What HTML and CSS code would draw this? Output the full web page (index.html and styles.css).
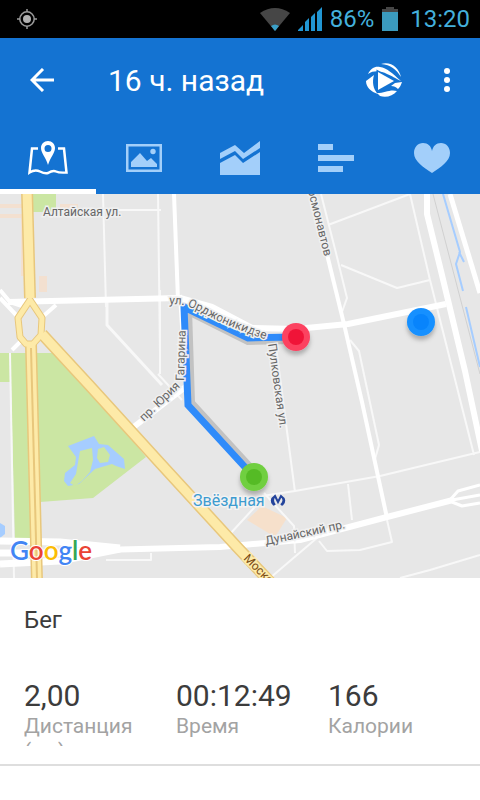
FILE: index.html
```html
<!DOCTYPE html>
<html lang="ru">
<head>
    <meta charset="UTF-8">
    <meta name="viewport" content="width=device-width, initial-scale=1.0">
    <title>16 ч. назад</title>
    <link rel="stylesheet" href="styles.css">
</head>
<body>
    <div class="status-bar">
        <svg class="gps" width="20" height="20" viewBox="0 0 20 20" fill="none" stroke="#9a9a9a" stroke-width="1.5">
            <circle cx="10" cy="10" r="7.2"/>
            <circle cx="10" cy="10" r="4" fill="#b0b0b0" stroke="none"/>
            <path d="M10 0v3M10 17v3M0 10h3M17 10h3"/>
        </svg>
        <div class="status-right">
            <svg width="30" height="23" viewBox="0 0 30 23">
                <path d="M0 5Q15-5 30 5L15 23Z" fill="#464646"/>
                <path d="M11 18Q15 15 19 18L15 23Z" fill="#3ba0c8"/>
            </svg>
            <svg class="signal" width="24" height="24" viewBox="0 0 24 24" fill="#2196d3">
                <path d="M0 24v-1l5-5v6zM7 24v-9l4-4v13zM13 24V10l4-4v18zM19 24V5l5-5v24z"/>
            </svg>
            <span>86%</span>
            <svg class="battery" width="16" height="24" viewBox="0 0 16 24">
                <path d="M4 0h8v2h4v5H0V2h4z" fill="#464646"/>
                <path d="M0 5h16v19H0z" fill="#3b9abd"/>
            </svg>
            <span>13:20</span>
        </div>
    </div>

    <header class="header">
        <div class="toolbar">
            <button class="icon-btn" aria-label="Назад">
                <svg width="24" height="24" viewBox="0 0 24 24" fill="none" stroke="#fff" stroke-width="3">
                    <path d="M24 12H2M13 1L2 12l11 11"/>
                </svg>
            </button>
            <h1>16 ч. назад</h1>
            <button class="icon-btn relive" aria-label="Воспроизвести">
                <svg width="36" height="34" viewBox="0 0 36 34" fill="#fff">
                    <path d="M2 11C5 5 9 3 14 4c7 1 12 6 21 14-6-3-9-5-14-7C15 8 8 7 2 11z"/>
                    <path d="M15 1c10-3 18 4 20 13C30 6 25 2 15 1z"/>
                    <path d="M0 18l8-6c-2 7-1 14 4 19C5 29 0 24 0 18z"/>
                    <path d="M25 23l4-3 7-1c-1 3-2 5-4 7-2-2-4-3-7-3z"/>
                    <path d="M11 30c8 0 13-4 20-2-4 5-11 7-17 5-1-1-2-2-3-3z"/>
                    <path d="M12 9l16 9-16 9z" stroke="#1473d2" stroke-width="3" paint-order="stroke"/>
                </svg>
            </button>
            <button class="icon-btn" aria-label="Ещё">
                <svg width="6" height="26" viewBox="0 0 6 26" fill="#fff">
                    <circle cx="3" cy="4" r="3"/>
                    <circle cx="3" cy="13" r="3"/>
                    <circle cx="3" cy="22" r="3"/>
                </svg>
            </button>
        </div>
        <nav class="tabs">
            <button class="tab active" aria-label="Карта">
                <svg width="40" height="34" viewBox="0 0 40 34">
                    <path d="M10 7.500H4L1.500 31.500Q7 28 12 30.500T20 32Q25 29 28 30.500T38.500 31.500L36 7.500H30" fill="none" stroke="#fff" stroke-width="2.500"/>
                    <path d="M20 0c-4 0-7 3-7 7 0 5 5 10 7 17 2-7 7-12 7-17 0-4-3-7-7-7zm0 4a3.500 3.500 0 1 1 0 7 3.500 3.500 0 0 1 0-7z" fill="#fff" fill-rule="evenodd"/>
                </svg>
            </button>
            <button class="tab" aria-label="Фото">
                <svg width="36" height="28" viewBox="0 0 36 28" fill="#a3cffa">
                    <path d="M0 0h36v28H0zM2.500 2.500v23h31v-23z" fill-rule="evenodd"/>
                    <path d="M5 23v-5l9-9 7 8 4-3 6 6v3z"/>
                    <circle cx="27" cy="7.500" r="2.700"/>
                </svg>
            </button>
            <button class="tab" aria-label="Графики">
                <svg width="40" height="34" viewBox="0 0 40 34" fill="#a3cffa">
                    <path d="M0 12l15-8 9 8L40 0v7L23 18l-8-8-15 8z"/>
                    <path d="M0 22l15-8 8 8 17-11v23H0z"/>
                </svg>
            </button>
            <button class="tab" aria-label="Отрезки">
                <svg width="36" height="28" viewBox="0 0 36 28" fill="#a3cffa">
                    <path d="M0 0h15v6H0zM0 11h36v6H0zM0 22h25v6H0z"/>
                </svg>
            </button>
            <button class="tab" aria-label="Пульс">
                <svg width="36" height="30" viewBox="0 0 36 30" fill="#a3cffa">
                    <path d="M18 30C9 24 0 18 0 10 0 4 4 0 9 0c5 0 8 3 9 8 1-5 4-8 9-8s9 4 9 10c0 8-9 14-18 20z"/>
                </svg>
            </button>
        </nav>
    </header>

    <main>
        <svg class="map" viewBox="0 194 480 384" role="img" aria-label="Карта маршрута">
            <defs>
                <path id="ordzh" d="M169 304L184 305Q193 308 212 318T268 340"/>
                <filter id="shadow" x="-30%" y="-30%" width="160%" height="180%">
                    <feDropShadow dx="0" dy="4" stdDeviation="2" flood-opacity="0.25"/>
                </filter>
            </defs>
            <rect y="194" width="480" height="384" fill="#e7e7e7"/>

            <!-- парки -->
            <g fill="#cbe6a3">
                <path d="M33 194h23v18H33z"/>
                <path d="M0 353h62l84 104-53 41-53 4V540H15L11 385H0z"/>
            </g>
            <path d="M0 382h11l3 158v38H0z" fill="#e7e7e7"/>
            <path d="M10 353L14 578" class="road r1"/>

            <!-- застройка -->
            <g fill="#f3e0d0">
                <path d="M0 204h22v4H0zM0 214h22v4H0zM60 204h18v8H60zM21 218h3v58h-3zM39 276h8v16h-8z"/>
                <path d="M247 520l15-14 25 12-12 19z" fill="#f6e0cb"/>
            </g>

            <!-- вода -->
            <g fill="#a6cdff">
                <path d="M68 446l26-10 5 8 9 1 16 14 1 10-9-3-4-2-17 5-16 15-11 2-4-5 1-8 10-8 1-8z"/>
                <path d="M0 523l5 3v8l-5 4z"/>
            </g>
            <g fill="#cbe6a3">
                <path d="M80 451l12-3 1 12-3 12-8 9-7 5-5-3 6-9z"/>
                <path d="M98 449l6-2 6 8-2 7-8 1-3-5z"/>
            </g>
            <path d="M443 194l17 58-4 12 7 27M466 307l14 60M459 252l5 10" fill="none" stroke="#a6cdff" stroke-width="2"/>
            <path d="M433 194l47 180" fill="none" stroke="#d0d0d0"/>

            <!-- мелкие улицы -->
            <g class="road r1">
                <path d="M103 194l3 113"/>
                <path d="M86 210h75M158 194l2 160"/>
                <path d="M107 300v25l55 60" stroke-width="3"/>
                <path d="M160 290v84M158 374l24 26"/>
                <path d="M321 194l15 59 11 45-5 14M328 225l82-31 20 86M341 265l56 23 33-8"/>
                <path d="M350 340l9 11 20 94-4 14"/>
                <path d="M430 280l44 175M275 340l20 152M230 534l34-37M262 496l33-5 85-15 100-24"/>
                <path d="M348 484l4 36M387 520l5 22-32 8-33 1-8-10"/>
                <path d="M400 578l30-8 50-15M264 493l30 33 1 27M270 578l61-52"/>
                <path d="M14 566h456" opacity="0"/>
                <path d="M106 560h45v-7"/>
            </g>

            <!-- крупные улицы -->
            <g class="road r2">
                <path d="M0 290l10 12 12 4M0 298l18 19M40 319l16-14M12 350l8-8" stroke-width="4"/>
                <path d="M8 302l172-4 32 9 40 21 44 1 52-5 98-20" stroke-width="6"/>
                <path d="M174 194l4 106M180 295l7 110" stroke-width="4"/>
                <path d="M313 194l10 44 21 86 18 78 25 116" stroke-width="4"/>
                <path d="M427 194v20l14 57 24 100 17 80" stroke-width="6"/>
                <path d="M450 194l30 99" stroke-width="5"/>
                <path d="M188 385l-57 44" stroke-width="6"/>
                <path d="M60 551l160-4 80-7 87-23 66-17" stroke-width="6"/>
                <path d="M0 541l60 1 60 6M0 564l60-3 60-12M0 553h100" stroke-width="7"/>
                <path d="M450 500l8-9 22-6M452 500l28-5M452 502l10 4 18-3" stroke-width="3"/>
            </g>

            <!-- шоссе -->
            <g class="hw-edge">
                <path d="M27 190l3 108M31 345l6 237M42 334l48 52 70 77 78 85 34 36"/>
                <path d="M30 300l12 18-1 17-8 9h-7l-6-7-2-19z" class="ring"/>
            </g>
            <g class="hw">
                <path d="M27 190l3 108M31 345l6 237M42 334l48 52 70 77 78 85 34 36"/>
                <path d="M30 300l12 18-1 17-8 9h-7l-6-7-2-19z" class="ring"/>
            </g>
            <path d="M31 348l6 230" fill="none" stroke="#e8c77c" stroke-width="2"/>

            <!-- трек -->
            <path d="M186 310l62 31 46-1" class="track track-shadow"/>
            <path d="M188 309l3 94 65 71" class="track track-shadow"/>
            <path d="M294 337l-46 1-64-31 4 98 66 72" class="track"/>

            <g class="street">
                <text x="43" y="216">Алтайская ул.</text>
                <text><textPath href="#ordzh">ул. Орджоникидзе</textPath></text>
                <text transform="translate(184 381) rotate(-88)">Гагарина</text>
                <text transform="translate(144 422) rotate(-44)">пр. Юрия</text>
                <text transform="translate(268 344) rotate(82)">Пулковская ул.</text>
                <text transform="translate(306 183) rotate(76)">Космонавтов</text>
                <text transform="translate(266 545) rotate(-12)">Дунайский пр.</text>
                <text transform="translate(243 559) rotate(45)" class="avenue">Московское</text>
            </g>
            <text x="193" y="506" class="metro">Звёздная</text>
            <path d="M275 505q-4-5 0-9l3 6 3-6q5 4 0 9M275 496q-6 4-1 9M281 496q6 4 1 9" fill="none" stroke="#24449c" stroke-width="2"/>

            <g filter="url(#shadow)">
                <circle cx="296" cy="337" r="14" fill="#fc4261"/>
                <circle cx="421" cy="322" r="14" fill="#1590ff"/>
                <circle cx="254" cy="477" r="14" fill="#70cf3f"/>
            </g>
            <circle cx="296" cy="337" r="8" fill="#f01438"/>
            <circle cx="421" cy="322" r="8" fill="#0884fc"/>
            <circle cx="254" cy="477" r="8" fill="#55bb25"/>

            <text x="10" y="560" class="google"><tspan fill="#4285f4">G</tspan><tspan fill="#ea4335">o</tspan><tspan fill="#fbbc05">o</tspan><tspan fill="#4285f4">g</tspan><tspan fill="#34a853">l</tspan><tspan fill="#ea4335">e</tspan></text>
        </svg>

        <section class="summary">
            <h2>Бег</h2>
            <dl class="stats">
                <div class="stat">
                    <dd>2,00</dd>
                    <dt>Дистанция (км)</dt>
                </div>
                <div class="stat">
                    <dd>00:12:49</dd>
                    <dt>Время</dt>
                </div>
                <div class="stat">
                    <dd>166</dd>
                    <dt>Калории</dt>
                </div>
            </dl>
        </section>
    </main>
</body>
</html>
```

FILE: styles.css
```css
body {
    margin: 0;
    font-family: Roboto, "Noto Sans", sans-serif;
    background: #fff;
    color: #3c3c3c;
}
svg {
    display: block;
}
button {
    padding: 0;
    border: none;
    background: none;
    cursor: pointer;
}
.status-bar {
    display: flex;
    justify-content: space-between;
    align-items: center;
    height: 38px;
    padding: 0 10px 0 17px;
    background: #000;
    color: #44b0dc;
    font-size: 24px;
}
.status-right {
    display: flex;
    align-items: center;
    gap: 8px;
}
.battery {
    margin-right: 4px;
}
.header {
    background: #1473d2;
}
.toolbar {
    display: flex;
    align-items: center;
    height: 84px;
    padding: 0 12px;
}
.toolbar h1 {
    flex: 1;
    margin: 0 0 0 36px;
    color: #fff;
    font-size: 30px;
    font-weight: 400;
}
.icon-btn {
    display: flex;
    align-items: center;
    justify-content: center;
    width: 60px;
    height: 60px;
}
.icon-btn:last-child {
    width: 42px;
}
.relive {
    width: 84px;
}
.tabs {
    display: flex;
    height: 72px;
}
.tab {
    flex: 1;
    display: flex;
    align-items: center;
    justify-content: center;
    border-top: 5px solid transparent;
    border-bottom: 5px solid transparent;
}
.tab.active {
    border-bottom-color: #fff;
}

/* карта */
.map {
    width: 100%;
    height: auto;
}
.road {
    fill: none;
    stroke-linejoin: round;
}
.r1 {
    stroke: #f8f8f8;
    stroke-width: 2;
}
.r2 {
    stroke: #fff;
}
.hw-edge, .hw {
    fill: none;
    stroke-linejoin: round;
}
.hw-edge {
    stroke: #e8c77c;
    stroke-width: 12;
}
.hw {
    stroke: #fdeaa8;
    stroke-width: 9;
}
.hw-edge .ring {
    stroke-width: 7;
}
.hw .ring {
    stroke-width: 5;
}
.track {
    fill: none;
    stroke: #2f8bfa;
    stroke-width: 7;
}
.track-shadow {
    stroke: #c2c2c2;
    stroke-width: 8;
}
.street {
    font-size: 12px;
    fill: #666;
    stroke: #f0f0f0;
    stroke-width: 3;
    paint-order: stroke;
}
.avenue {
    fill: #7a4a14;
    stroke: #fdeaa8;
}
.metro {
    font-size: 16px;
    fill: #3d9bd0;
    stroke: #f3f3f3;
    stroke-width: 3;
    paint-order: stroke;
}
.google {
    font-family: Lato, sans-serif;
    font-size: 26px;
    font-weight: 600;
    stroke: #fff;
    stroke-width: 2;
    paint-order: stroke;
}

/* показатели */
.summary {
    padding: 28px 0 18px 24px;
    border-bottom: 2px solid #dedede;
}
.summary h2 {
    margin: 0 0 44px;
    font-size: 24px;
    line-height: 28px;
    font-weight: 400;
}
.stats {
    display: grid;
    grid-template-columns: repeat(3, 1fr);
    margin: 0;
}
.stat {
    display: flex;
    flex-direction: column;
    padding-right: 24px;
}
.stat dd {
    margin: 0;
    font-size: 30px;
    line-height: 36px;
}
.stat dt {
    max-height: 32px;
    overflow: hidden;
    font-size: 21px;
    line-height: 25px;
    color: #a3a3a3;
}
```
